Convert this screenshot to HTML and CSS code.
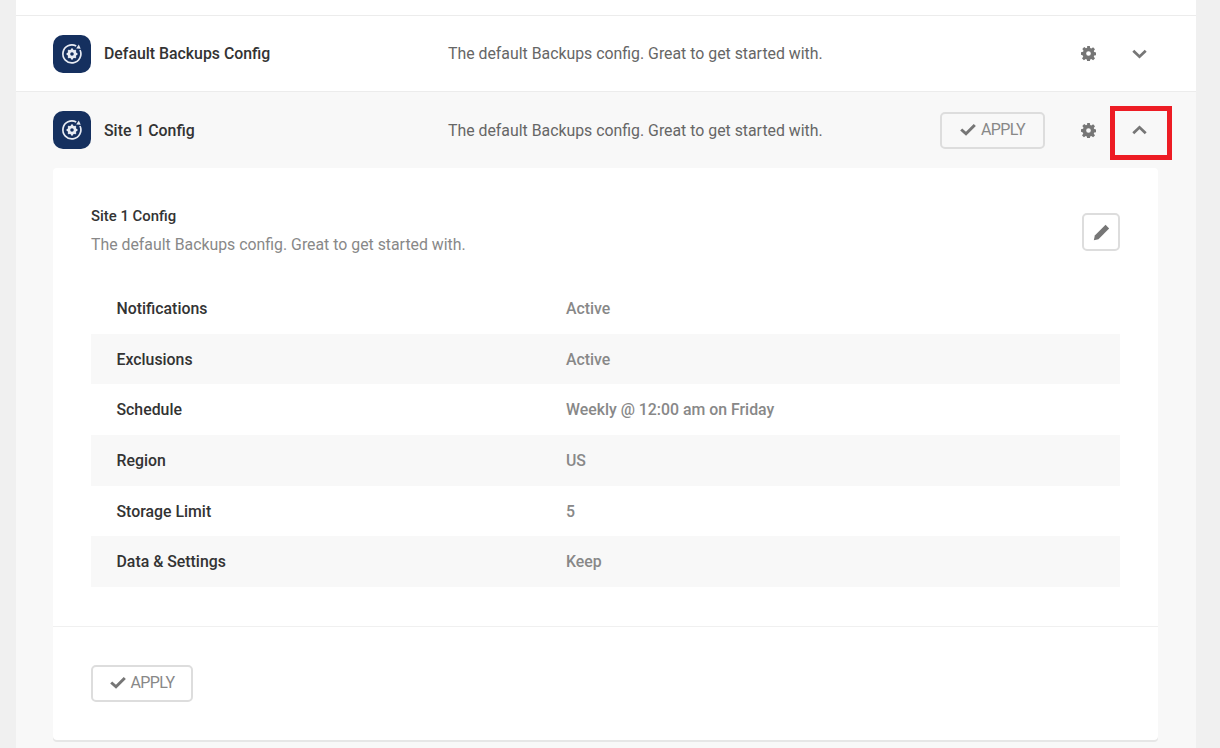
FILE: index.html
```html
<!DOCTYPE html>
<html lang="en">
<head>
<meta charset="utf-8">
<title>Configs</title>
<link rel="stylesheet" href="styles.css">
</head>
<body>
<svg class="defs" width="0" height="0" aria-hidden="true">
  <symbol id="gear" viewBox="0 0 16 16">
    <path fill-rule="evenodd" d="M6.600 0h2.800l.4 2.200 1.200.5 1.900-1.300 2 2-1.300 1.900.5 1.200 2.200.4v2.800l-2.200.4-.5 1.200 1.300 1.900-2 2-1.900-1.300-1.200.5-.4 2.200H6.600l-.4-2.200-1.200-.5-1.900 1.300-2-2 1.300-1.900-.5-1.200L0 9.400V6.600l2.200-.4.500-1.200-1.300-1.900 2-2 1.900 1.300 1.200-.5zM8 5.500a2.500 2.500 0 1 0 0 5 2.500 2.500 0 0 0 0-5z"/>
  </symbol>
  <symbol id="check" viewBox="0 0 16 12">
    <path d="M1.200 6l4.800 4.300L14.800 1.500" fill="none" stroke="currentColor" stroke-width="3"/>
  </symbol>
  <symbol id="logo" viewBox="0 0 38 38">
    <rect width="38" height="38" rx="10" fill="#15305f"/>
    <path d="M27 15A9 9 0 1 1 23.200 11" fill="none" stroke="#e8ecf3" stroke-width="1.700"/>
    <path d="M25.800 9.500l1.900 4.200-4.500-.3z" fill="#e8ecf3"/>
    <circle cx="19" cy="19" r="3.200" fill="none" stroke="#e8ecf3" stroke-width="2.800"/>
    <path d="M19 13.600v2.400M19 22v2.400M13.600 19H16M22 19h2.400M15.200 15.200l1.700 1.700M21.100 21.100l1.700 1.700M15.200 22.800l1.700-1.700M21.100 16.900l1.700-1.700" stroke="#e8ecf3" stroke-width="2"/>
  </symbol>
</svg>

<main class="card">
  <div class="strip"></div>

  <section class="row">
    <svg class="logo"><use href="#logo"/></svg>
    <div class="name">Default Backups Config</div>
    <div class="desc">The default Backups config. Great to get started with.</div>
    <div class="actions">
      <button class="icon-btn" aria-label="Settings"><svg class="gear"><use href="#gear"/></svg></button>
      <button class="icon-btn" aria-label="Expand">
        <svg class="chev" viewBox="0 0 14 9"><path d="M1.200 1.500L7 7l5.800-5.500" fill="none" stroke="currentColor" stroke-width="2.600"/></svg>
      </button>
    </div>
  </section>

  <div class="open">
    <section class="row row-open">
      <svg class="logo"><use href="#logo"/></svg>
      <div class="name">Site 1 Config</div>
      <div class="desc">The default Backups config. Great to get started with.</div>
      <div class="actions">
        <button class="apply apply-top"><svg class="check"><use href="#check"/></svg>APPLY</button>
        <button class="icon-btn" aria-label="Settings"><svg class="gear"><use href="#gear"/></svg></button>
        <button class="icon-btn" aria-label="Collapse">
          <svg class="chev" viewBox="0 0 14 9"><path d="M1.200 7.500L7 2l5.800 5.500" fill="none" stroke="currentColor" stroke-width="2.600"/></svg>
        </button>
      </div>
      <div class="highlight"></div>
    </section>

    <article class="panel">
      <div class="panel-body">
        <header class="panel-head">
          <div>
            <h2 class="panel-title">Site 1 Config</h2>
            <p class="panel-desc">The default Backups config. Great to get started with.</p>
          </div>
          <button class="edit" aria-label="Edit">
            <svg class="pencil" viewBox="0 0 16 16"><path d="M11.800.8l3.400 3.400L5.100 14.300.8 15.200l.9-4.300z" fill="currentColor"/></svg>
          </button>
        </header>
        <div class="table">
          <div class="tr"><div class="th">Notifications</div><div class="td">Active</div></div>
          <div class="tr"><div class="th">Exclusions</div><div class="td">Active</div></div>
          <div class="tr"><div class="th">Schedule</div><div class="td">Weekly @ 12:00 am on Friday</div></div>
          <div class="tr"><div class="th">Region</div><div class="td">US</div></div>
          <div class="tr"><div class="th">Storage Limit</div><div class="td">5</div></div>
          <div class="tr"><div class="th">Data &amp; Settings</div><div class="td">Keep</div></div>
        </div>
      </div>
      <footer class="panel-foot">
        <button class="apply apply-bottom"><svg class="check"><use href="#check"/></svg>APPLY</button>
      </footer>
    </article>
  </div>
</main>
</body>
</html>
```
FILE: styles.css
```css
* { box-sizing: border-box; }
html, body { margin: 0; height: 100%; }
body {
  background: #f0f0f0;
  font-family: Roboto, "Liberation Sans", sans-serif;
  font-size: 15.85px;
  color: #333;
  overflow: hidden;
  padding: 0 24px 0 16px;
}
.defs { position: absolute; }
button { font-family: inherit; cursor: pointer; }

.card { background: #fff; height: 748px; overflow: hidden; }
.strip { height: 16px; border-bottom: 1px solid #ececec; }

.row {
  height: 76px;
  display: flex;
  align-items: center;
  padding: 0 31px 0 37px;
  position: relative;
  border-bottom: 1px solid #ececec;
}
.row-open { border-bottom: 0; }
.open { background: #f8f8f8; padding-bottom: 8px; }

.logo { width: 38px; height: 38px; flex: none; margin-right: 13px; }
.name { width: 344px; flex: none; font-weight: 500; color: #333; }
.desc { color: #666; flex: 1; white-space: nowrap; }

.actions { display: flex; align-items: center; margin-left: auto; }
.icon-btn {
  width: 51px;
  height: 40px;
  background: none;
  border: 0;
  padding: 0;
  color: #767676;
  display: flex;
  align-items: center;
  justify-content: center;
}
.gear { width: 15px; height: 15px; fill: #767676; }
.chev { width: 15px; height: 10px; }

.apply {
  display: inline-flex;
  align-items: center;
  justify-content: center;
  height: 37px;
  background: transparent;
  border: 2px solid #ddd;
  border-radius: 5px;
  color: #888;
  font-size: 16px;
  letter-spacing: -0.6px;
  font-weight: 400;
  padding: 0 0 2px;
}
.apply-top { width: 105px; margin-right: 18px; }
.apply-bottom { width: 102px; }
.check { width: 16px; height: 13px; margin-right: 5px; color: #767676; }

.highlight {
  position: absolute;
  left: 1094px;
  top: 14px;
  width: 62px;
  height: 54px;
  border: 5px solid #ed1c24;
  pointer-events: none;
}

.panel {
  margin: 0 38px 0 37px;
  background: #fff;
  border-radius: 4px;
  box-shadow: 0 2px 0 #e6e6e6;
  height: 572px;
  display: flex;
  flex-direction: column;
}
.panel-body { padding: 38px 38px 39px; height: 459px; border-bottom: 1px solid #f0f0f0; }
.panel-head { display: flex; justify-content: space-between; align-items: flex-start; }
.panel-title { margin: 0; font-size: 14.9px; line-height: 20px; font-weight: 500; color: #333; }
.panel-desc { margin: 9px 0 0; color: #888; line-height: 20px; }
.edit {
  width: 38px;
  height: 38px;
  margin-top: 7px;
  background: #fff;
  border: 2px solid #ddd;
  border-radius: 5px;
  padding: 0;
  color: #767676;
  display: flex;
  align-items: center;
  justify-content: center;
}
.pencil { width: 17px; height: 17px; }

.table { margin-top: 28px; }
.tr { display: flex; align-items: center; height: 50.67px; padding: 0.6px 0 0 25.5px; }
.tr:nth-child(even) { background: #f8f8f8; }
.th { width: 449.5px; font-weight: 500; color: #333; }
.td { font-weight: 500; color: #888; }

.panel-foot { padding: 38px; }
```
